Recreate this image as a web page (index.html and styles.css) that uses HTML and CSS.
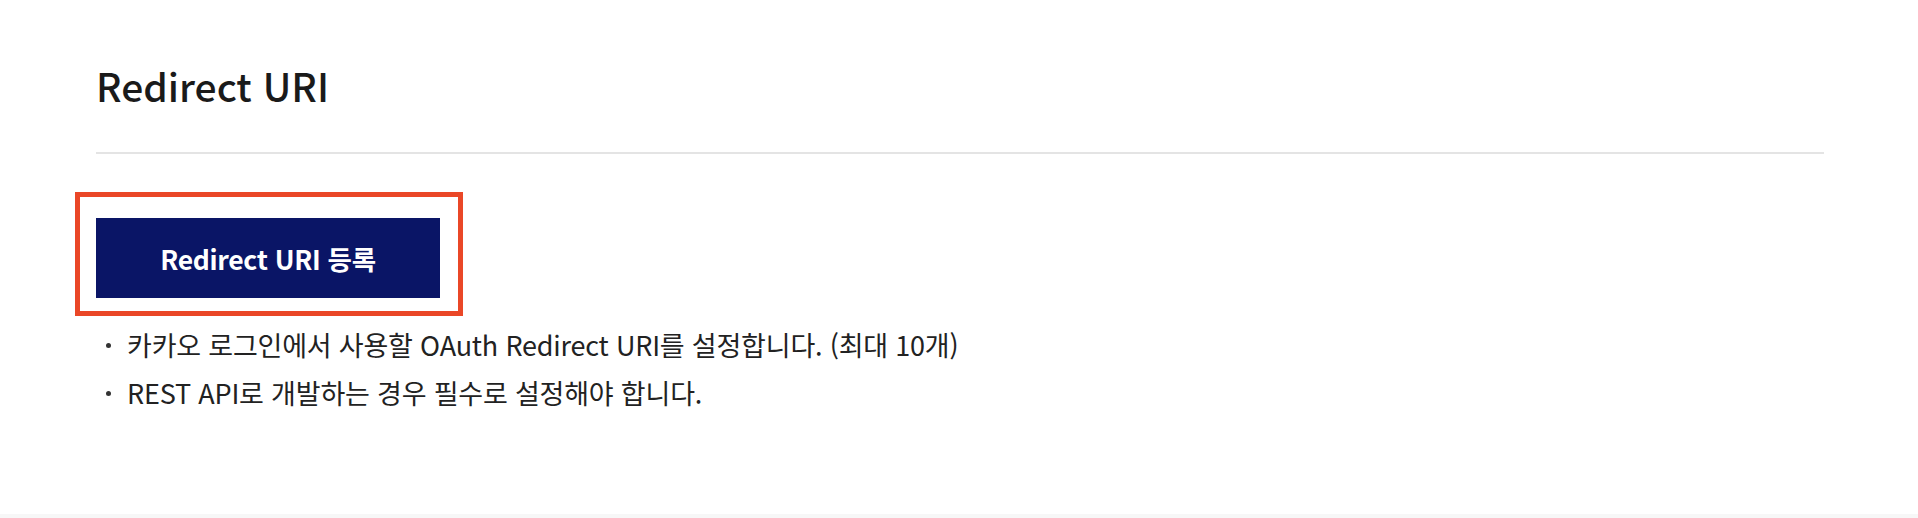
FILE: index.html
```html
<!DOCTYPE html>
<html lang="ko">
<head>
<meta charset="utf-8">
<title>Redirect URI</title>
<link rel="stylesheet" href="styles.css">
</head>
<body>
<section class="panel">
  <h2 class="panel-title">Redirect URI</h2>
  <div class="panel-body">
    <div class="btn-wrap">
      <button class="btn-primary" type="button">Redirect URI 등록</button>
      <span class="highlight" aria-hidden="true"></span>
    </div>
    <ul class="notes">
      <li>카카오 로그인에서 사용할 OAuth Redirect URI를 설정합니다. (최대 10개)</li>
      <li>REST API로 개발하는 경우 필수로 설정해야 합니다.</li>
    </ul>
  </div>
</section>
<div class="next-section"></div>
</body>
</html>
```
FILE: styles.css
```css
html, body {
  margin: 0;
  padding: 0;
  background: #ffffff;
}
body {
  font-family: "Noto Sans CJK KR", "Noto Sans", sans-serif;
  color: #1e1e1e;
}
.panel {
  height: 514px;
  box-sizing: border-box;
  padding: 56px 94px 0 96px;
}
.panel-title {
  margin: 0;
  font-size: 39px;
  line-height: 58px;
  font-weight: 500;
  color: #1a1a1a;
  padding-bottom: 38px;
  border-bottom: 2px solid #e4e4e4;
}
.panel-body {
  padding-top: 64px;
}
.btn-wrap {
  position: relative;
  display: inline-block;
  vertical-align: top;
}
.btn-primary {
  display: block;
  width: 344px;
  height: 80px;
  border: 0;
  margin: 0;
  padding: 0;
  background: #0a1566;
  color: #ffffff;
  font-family: inherit;
  font-size: 26.5px;
  font-weight: 700;
  letter-spacing: -0.3px;
  cursor: pointer;
}
.highlight {
  position: absolute;
  left: -21px;
  top: -26px;
  width: 388px;
  height: 124px;
  box-sizing: border-box;
  border: 5px solid #ea4727;
  pointer-events: none;
}
.notes {
  list-style: none;
  margin: 23px 0 0;
  padding: 0;
  font-size: 27px;
  line-height: 48px;
  color: #222222;
  letter-spacing: -0.2px;
}
.notes li {
  display: flex;
  align-items: center;
}
.notes li::before {
  content: "";
  flex: none;
  width: 5px;
  height: 5px;
  border-radius: 50%;
  background: #333333;
  margin: 0 16px 0 10px;
}
.next-section {
  height: 40px;
  background: #f7f7f7;
}
```
